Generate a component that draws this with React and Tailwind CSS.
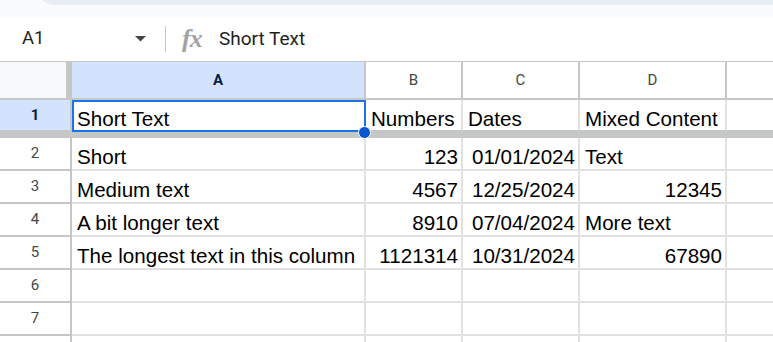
import React from "react";

const widths = ["w-[294px]", "w-[97px]", "w-[117px]", "w-[147px]"];

const rows = [
  { n: 2, cells: [["Short", "l"], ["123", "r"], ["01/01/2024", "r"], ["Text", "l"]] },
  { n: 3, cells: [["Medium text", "l"], ["4567", "r"], ["12/25/2024", "r"], ["12345", "r"]] },
  { n: 4, cells: [["A bit longer text", "l"], ["8910", "r"], ["07/04/2024", "r"], ["More text", "l"]] },
  { n: 5, cells: [["The longest text in this column", "l"], ["1121314", "r"], ["10/31/2024", "r"], ["67890", "r"]] },
  { n: 6, cells: [["", "l"], ["", "l"], ["", "l"], ["", "l"]] },
  { n: 7, cells: [["", "l"], ["", "l"], ["", "l"], ["", "l"]] },
  // row 8 is only a sliver at the bottom edge, its number falls outside
  { n: "", cells: [["", "l"], ["", "l"], ["", "l"], ["", "l"]] },
];

const DataCell = ({ w, text, align }) => (
  <div
    className={`${w} shrink-0 h-full border-r-2 border-b-2 border-[#e1e1e1] flex items-end pb-px pl-[5px] pr-[3px] whitespace-nowrap overflow-hidden ${
      align === "r" ? "justify-end" : "justify-start"
    }`}
  >
    <span className="leading-[23px]">{text}</span>
  </div>
);

const FormulaBar = () => (
  <div className="h-[45px] border-b border-[#c4c7c5] bg-white flex items-center">
    <div className="w-[135px] pl-[22px] text-[18.5px] text-[#1f1f1f] font-['Roboto',sans-serif]">
      A1
    </div>
    <svg width="11" height="6" viewBox="0 0 11 6" className="shrink-0">
      <polygon points="0,0 11,0 5.5,5.5" fill="#444746" />
    </svg>
    <div className="ml-[19px] w-px h-[26px] bg-[#c4c7c5]" />
    <span className="ml-[16px] w-[23px] italic font-bold text-[26px] leading-none text-[#a3a3a3] font-['Liberation_Serif',serif] tracking-[-1px]">
      fx
    </span>
    <span className="ml-[14px] text-[19px] text-[#1f1f1f] font-['Roboto',sans-serif]">
      Short Text
    </span>
  </div>
);

const HeaderRow = () => (
  <div className="flex h-[38px] border-b-2 border-[#c4c7c5] text-[15px] text-[#444746] font-['Roboto',sans-serif]">
    <div className="w-[72px] shrink-0 bg-[#f8f9fa] border-r-[6px] border-[#c4c7c5]" />
    <div className="w-[294px] shrink-0 bg-[#d3e3fd] border-r-2 border-[#c4c7c5] flex items-center justify-center font-bold text-[#041e49]">
      A
    </div>
    <div className="w-[97px] shrink-0 border-r-2 border-[#c4c7c5] flex items-center justify-center">
      B
    </div>
    <div className="w-[117px] shrink-0 border-r-2 border-[#c4c7c5] flex items-center justify-center">
      C
    </div>
    <div className="w-[147px] shrink-0 border-r-2 border-[#c4c7c5] flex items-center justify-center">
      D
    </div>
    <div className="flex-1" />
  </div>
);

const FirstRow = () => (
  <div className="flex h-[30px]">
    <div className="w-[72px] shrink-0 bg-[#d3e3fd] border-r-2 border-[#c4c7c5] flex items-center justify-center text-[15px] font-bold text-[#041e49] font-['Roboto',sans-serif]">
      1
    </div>
    <div className="w-[294px] shrink-0 relative border-r-2 border-[#e1e1e1] flex items-end pl-[5px]">
      <span className="leading-[23px]">Short Text</span>
      <div className="absolute left-0 top-0 w-[294px] h-[32px] border-2 border-[#1a73e8] z-10" />
      <div className="absolute left-[286px] top-[26px] w-[13px] h-[13px] rounded-full bg-[#0b57d0] border border-white z-20" />
    </div>
    <div className="w-[97px] shrink-0 border-r-2 border-[#e1e1e1] flex items-end pl-[5px] whitespace-nowrap">
      <span className="leading-[23px]">Numbers</span>
    </div>
    <div className="w-[117px] shrink-0 border-r-2 border-[#e1e1e1] flex items-end pl-[5px]">
      <span className="leading-[23px]">Dates</span>
    </div>
    <div className="w-[147px] shrink-0 border-r-2 border-[#e1e1e1] flex items-end pl-[5px] whitespace-nowrap">
      <span className="leading-[23px]">Mixed Content</span>
    </div>
    <div className="flex-1" />
  </div>
);

export default function App() {
  return (
    <div className="w-[773px] h-[342px] overflow-hidden bg-white text-black">
      <div className="h-[17px] bg-[#f9fbfd] overflow-hidden">
        <div className="ml-[38px] -mt-[11px] h-[16px] bg-[#e9eef6] rounded-bl-[16px]" />
      </div>
      <FormulaBar />
      <HeaderRow />
      <div className="text-[20.6px] font-['Liberation_Sans',Arial,sans-serif]">
        <FirstRow />
        <div className="h-[8px] bg-[#c4c7c5]" />
        {rows.map((row, r) => (
          <div key={r} className="flex h-[33px]">
            <div className="w-[72px] shrink-0 border-r-2 border-b-2 border-[#c4c7c5] flex items-center justify-center text-[15px] text-[#444746] font-['Roboto',sans-serif]">
              {row.n}
            </div>
            {row.cells.map(([text, align], i) => (
              <DataCell key={i} w={widths[i]} text={text} align={align} />
            ))}
            <div className="flex-1 h-full border-b-2 border-[#e1e1e1]" />
          </div>
        ))}
      </div>
    </div>
  );
}
